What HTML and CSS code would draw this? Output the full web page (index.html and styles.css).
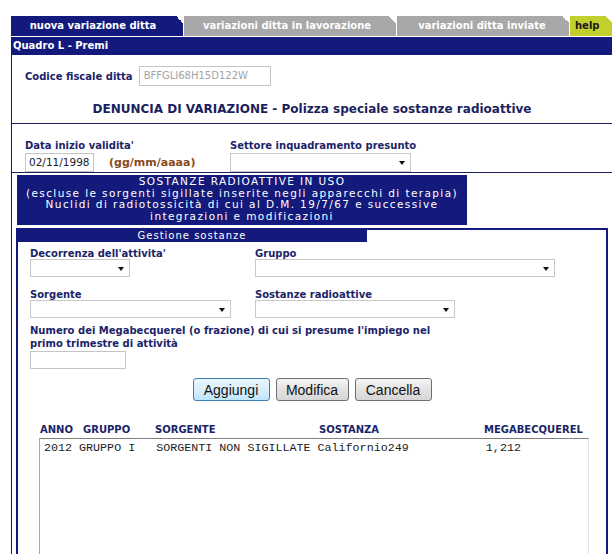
FILE: index.html
```html
<!DOCTYPE html>
<html>
<head>
<meta charset="utf-8">
<link rel="stylesheet" href="styles.css">
</head>
<body>
<div class="page">
  <div class="tabs">
    <div class="tab tab-active tab-1">nuova variazione ditta</div>
    <div class="tab tab-grey tab-2">variazioni ditta in lavorazione</div>
    <div class="tab tab-grey tab-3">variazioni ditta inviate</div>
    <div class="tab tab-help">help</div>
  </div>
  <div class="bar">Quadro L - Premi</div>
  <div class="main">
    <div class="cf-row">
      <span class="label">Codice fiscale ditta</span>
      <div class="input input-cf">BFFGLI68H15D122W</div>
    </div>
    <h1 class="title">DENUNCIA DI VARIAZIONE - Polizza speciale sostanze radioattive</h1>
    <div class="date-row">
      <div class="field field-date">
        <span class="label">Data inizio validita'</span>
        <div class="date-line">
          <div class="input input-date">02/11/1998</div>
          <span class="fmt">(gg/mm/aaaa)</span>
        </div>
      </div>
      <div class="field">
        <span class="label">Settore inquadramento presunto</span>
        <div class="select sel-settore"><span class="arrow"></span></div>
      </div>
    </div>
    <div class="info-box">
      <div>SOSTANZE RADIOATTIVE IN USO</div>
      <div>(escluse le sorgenti sigillate inserite negli apparecchi di terapia)</div>
      <div>Nuclidi di radiotossicità di cui al D.M. 19/7/67 e successive</div>
      <div>integrazioni e modificazioni</div>
    </div>
    <div class="gestione">
      <div class="gest-head">Gestione sostanze</div>
      <div class="grid">
        <div class="field">
          <span class="label">Decorrenza dell'attivita'</span>
          <div class="select sel-dec"><span class="arrow"></span></div>
        </div>
        <div class="field">
          <span class="label">Gruppo</span>
          <div class="select sel-gruppo"><span class="arrow"></span></div>
        </div>
        <div class="field">
          <span class="label">Sorgente</span>
          <div class="select sel-sorg"><span class="arrow"></span></div>
        </div>
        <div class="field">
          <span class="label">Sostanze radioattive</span>
          <div class="select sel-sost"><span class="arrow"></span></div>
        </div>
      </div>
      <div class="field field-mbq">
        <span class="label lbl-mbq">Numero dei Megabecquerel (o frazione) di cui si presume l'impiego nel<br>primo trimestre di attività</span>
        <div class="input input-mbq"></div>
      </div>
      <div class="buttons">
        <button class="btn btn-focus">Aggiungi</button>
        <button class="btn btn-mod">Modifica</button>
        <button class="btn">Cancella</button>
      </div>
      <div class="table-head">
        <span class="th th-anno">ANNO</span>
        <span class="th th-gruppo">GRUPPO</span>
        <span class="th th-sorg">SORGENTE</span>
        <span class="th th-sost">SOSTANZA</span>
        <span class="th th-mbq">MEGABECQUEREL</span>
      </div>
      <div class="listbox">
        <div class="row">2012 GRUPPO I   SORGENTI NON SIGILLATE Californio249           1,212</div>
      </div>
    </div>
  </div>
</div>
</body>
</html>
```
FILE: styles.css
```css
html, body {
  margin: 0;
  padding: 0;
  background: #ffffff;
  overflow: hidden;
}
body {
  font-family: "DejaVu Sans", Verdana, sans-serif;
  font-size: 10px;
  color: #1b2468;
  width: 612px;
  height: 554px;
}
.page {
  padding: 16px 0 0 11px;
}
.tabs {
  display: flex;
  gap: 1px;
  height: 20px;
}
.tab {
  position: relative;
  font-weight: bold;
  font-size: 10px;
  line-height: 20px;
  text-align: center;
  color: #ffffff;
  box-sizing: border-box;
}
.tab::after {
  content: "";
  position: absolute;
  top: 0;
  right: 0;
  width: 7px;
  height: 7px;
  background: linear-gradient(to bottom left, #ffffff 50%, rgba(255,255,255,0) 50%);
}
.tab-active { background: #131a7c; }
.tab-grey { background: #a8a8a8; }
.tab-1 { width: 172px; padding-right: 8px; }
.tab-2 { width: 212px; padding-right: 6px; }
.tab-3 { width: 172px; padding-right: 2px; }
.tab-help {
  width: 42px;
  background: #c3cf2c;
  color: #1a1a1a;
  text-align: left;
  padding-left: 5px;
}
.bar {
  margin-top: 1px;
  height: 18px;
  line-height: 18px;
  background: #131a7c;
  color: #ffffff;
  font-weight: bold;
  font-size: 10px;
  padding-left: 2px;
}
.main {
  border-left: 1px solid #1b1f5e;
  height: 520px;
}
.label {
  font-weight: bold;
  font-size: 10px;
  line-height: 11px;
  color: #1b2468;
}
.cf-row {
  display: flex;
  align-items: center;
  gap: 6px;
  padding: 11px 0 0 13px;
}
.input {
  box-sizing: border-box;
  border: 1px solid #c4c4c4;
  background: #ffffff;
  height: 20px;
  line-height: 18px;
  font-size: 10px;
  padding-left: 3px;
  color: #222;
}
.input-cf {
  width: 132px;
  color: #a3a3a3;
  padding-left: 4px;
}
.title {
  margin: 15px 0 0 0;
  padding-bottom: 6px;
  border-bottom: 1px solid #1b1f5e;
  font-size: 12px;
  line-height: 16px;
  font-weight: bold;
  text-align: center;
  color: #1b1f5e;
}
.date-row {
  display: flex;
  padding: 16px 0 0 13px;
  height: 32px;
  border-bottom: 1px solid #1b1f5e;
}
.field {
  display: flex;
  flex-direction: column;
}
.field-date { width: 205px; }
.date-line {
  display: flex;
  align-items: center;
  gap: 15px;
  margin-top: 2px;
}
.field-date + .field .select { margin-top: 2px; }
.input-date {
  width: 69px;
  height: 19px;
  line-height: 17px;
  font-size: 10.5px;
  color: #222;
}
.fmt {
  font-weight: bold;
  font-size: 11px;
  color: #8a4a1a;
}
.select {
  box-sizing: border-box;
  height: 18px;
  border: 1px solid #c8c8c8;
  background: #fff;
  display: flex;
  align-items: center;
  justify-content: flex-end;
  padding-right: 5px;
}
.arrow {
  width: 0;
  height: 0;
  border-left: 3.5px solid transparent;
  border-right: 3.5px solid transparent;
  border-top: 4px solid #111;
  margin-top: 1px;
}
.sel-settore { width: 181px; height: 19px; }
.info-box {
  margin: 2px 0 0 5px;
  width: 450px;
  height: 50px;
  box-sizing: border-box;
  padding-top: 1px;
  background: #131a7c;
  color: #ffffff;
  text-align: center;
  font-size: 10.5px;
  line-height: 11.5px;
  letter-spacing: 1.4px;
}
.gestione {
  margin: 3px 0 0 4px;
  border: 2px solid #131a7c;
  border-bottom: none;
  height: 330px;
  width: 592px;
  box-sizing: border-box;
}
.gest-head {
  width: 350px;
  height: 12px;
  line-height: 12px;
  background: #131a7c;
  color: #ffffff;
  text-align: center;
  letter-spacing: 1px;
  font-size: 10px;
  margin-left: -1px;
}
.grid {
  display: grid;
  grid-template-columns: 225px 1fr;
  row-gap: 12px;
  padding: 6px 0 0 12px;
}
.sel-dec { width: 100px; }
.sel-gruppo { width: 300px; }
.sel-sorg { width: 201px; }
.sel-sost { width: 200px; }
.field-mbq {
  padding: 6px 0 0 12px;
}
.lbl-mbq { line-height: 13px; }
.input-mbq {
  width: 96px;
  height: 18px;
  margin-top: 1px;
}
.buttons {
  display: flex;
  justify-content: center;
  gap: 6px;
  padding-top: 9px;
}
.btn {
  font-family: "Liberation Sans", Arial, sans-serif;
  font-size: 14px;
  height: 23px;
  padding: 0;
  border: 1px solid #707070;
  border-radius: 3px;
  background: linear-gradient(#f5f5f5, #e2e2e2 50%, #d6d6d6);
  color: #111;
  width: 77px;
}
.btn-mod { width: 73px; }
.btn-focus {
  border-color: #3c7fb1;
  background: linear-gradient(#eaf6fd, #d9eefb 50%, #bee6fd);
}
.table-head {
  position: relative;
  height: 12px;
  margin-top: 23px;
  font-weight: bold;
  font-size: 10px;
}
.th { position: absolute; top: 0; color: #1b2468; }
.th-anno { left: 22px; }
.th-gruppo { left: 65px; }
.th-sorg { left: 137px; }
.th-sost { left: 301px; }
.th-mbq { left: 466px; }
.listbox {
  margin: 2px 0 0 21px;
  width: 550px;
  height: 130px;
  box-sizing: border-box;
  border: 1px solid #e2e2e2;
  border-top: 1px solid #808080;
  border-left: 1px solid #a8a8a8;
  padding: 2px 0 0 4px;
}
.row {
  font-family: "Liberation Mono", "Courier New", monospace;
  font-size: 11.7px;
  line-height: 14px;
  white-space: pre;
  color: #222;
}
```
